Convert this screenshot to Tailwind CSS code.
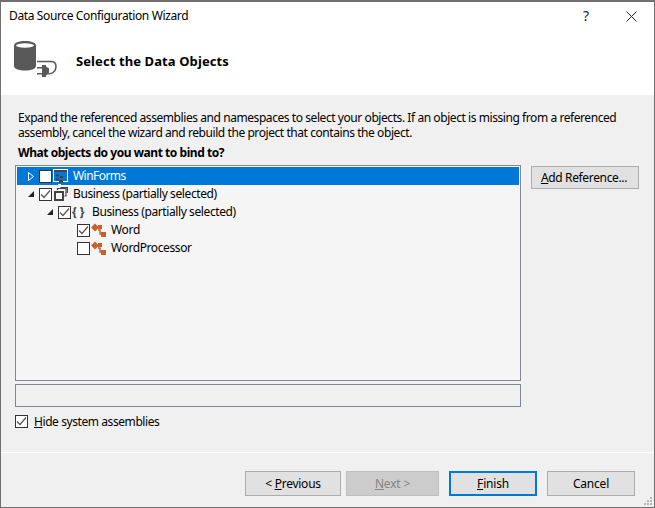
<!DOCTYPE html>
<html lang="en">
<head>
    <meta charset="UTF-8">
    <title>Data Source Configuration Wizard</title>
    <script src="https://cdn.jsdelivr.net/npm/@tailwindcss/browser@4"></script>
</head>
<body class="w-[655px] h-[508px] overflow-hidden bg-[#f0f0f0] font-['Noto_Sans',sans-serif] text-[12px] leading-[16px] text-black">
<div class="relative w-[655px] h-[508px] border-x border-b border-t-2 border-[#707070] flex flex-col">
    <!-- Header -->
    <div class="h-[93px] bg-white shrink-0">
        <div class="flex items-center h-[28px] pl-[8px]">
            <span class="flex-1 tracking-[-0.37px]">Data Source Configuration Wizard</span>
            <span class="w-[14px] mr-[-2px] text-[14px] text-[#222]">?</span>
            <svg class="ml-[31px] mr-[17px]" width="11" height="11" viewBox="0 0 11 11" fill="none" stroke="#222"><path d="M0.5 0.5l10 10M10.5 0.5l-10 10"/></svg>
        </div>
        <div class="flex items-start h-[50px] pl-[13px] pt-[11px]">
            <svg width="44" height="38" viewBox="0 0 44 38" class="shrink-0">
                <path d="M0 4.500C0 1.500 5 0 11 0s11 1.500 11 4.500V25c0 3-5 4.500-11 4.500S0 28 0 25z" fill="#595959"/>
                <ellipse cx="11" cy="4.500" rx="9" ry="2.200" fill="#fff"/>
                <path d="M23 20.500h14c3 0 5 2 5 5 0 4-3 7.500-7.500 7.500" fill="none" stroke="#595959" stroke-width="1.500"/>
                <path d="M23 26h5v1.500h-5zM23 32h5v1.500h-5zM28 24h4v12h-4zM32 25.500l3 2v5l-3 2z" fill="#595959"/>
            </svg>
            <span class="ml-[18px] mt-[12px] text-[13px] font-bold tracking-[0.1px]">Select the Data Objects</span>
        </div>
    </div>

    <!-- Body -->
    <div class="flex-1 pl-[14px] pr-[15px] pt-[15px]">
        <p class="ml-[3px] leading-[15px] tracking-[-0.43px] w-[620px]">Expand the referenced assemblies and namespaces to select your objects. If an object is missing from a referenced assembly, cancel the wizard and rebuild the project that contains the object.</p>
        <p class="ml-[3px] font-bold mt-[5px] h-[16px] tracking-[-0.45px]">What objects do you want to bind to?</p>

        <div class="flex mt-[4px]">
            <div class="w-[506px] shrink-0">
                <!-- Tree -->
                <div class="h-[216px] border border-[#828790] bg-[#f5f5f5] p-[1px]">
                    <div class="flex items-center h-[18px] bg-[#0078d7] text-white">
                        <svg class="ml-[11px]" width="7" height="9" viewBox="0 0 7 9" fill="none" stroke="#fff"><path d="M.5 .5l5 4-5 4z"/></svg>
                        <span class="ml-[4px] w-[13px] h-[13px] bg-white border border-[#333]"></span>
                        <svg class="ml-[1px] mt-[1px]" width="15" height="16" viewBox="0 0 15 16"><rect x=".5" y=".5" width="14" height="12" fill="none" stroke="#fff"/><rect x="1" y="1" width="13" height="2" fill="#444"/><path d="M3 5.500h3v2H3zM7 7h3v2H7zM3 9.500h3v2H3zM6 11h4v3H6z" fill="#444"/><path d="M5 15h3v1H5z" fill="#fff"/></svg>
                        <span class="ml-[5px] tracking-[-0.55px]">WinForms</span>
                    </div>
                    <div class="flex items-center h-[18px]">
                        <svg class="ml-[11px]" width="7" height="7" viewBox="0 0 7 7"><path d="M6 0v6H0z" fill="#222"/></svg>
                        <span class="ml-[4px] w-[13px] h-[13px] bg-white border border-[#333] flex items-center justify-center"><svg width="11" height="9" viewBox="0 0 11 9" fill="none" stroke="#555" stroke-width="1.200"><path d="M1 4.500l3 3 6-7"/></svg></span>
                        <svg class="ml-[2px]" width="14" height="14" viewBox="0 0 14 14" fill="none" stroke="#444" stroke-width="1.200"><rect x="1" y="5" width="8" height="8" stroke-width="2"/><path d="M3.500 3V1.500H12V9h-1.500"/><path d="M6.500 .6h7V6"/></svg>
                        <span class="ml-[5px] tracking-[-0.4px]">Business (partially selected)</span>
                    </div>
                    <div class="flex items-center h-[18px]">
                        <svg class="ml-[30px]" width="7" height="7" viewBox="0 0 7 7"><path d="M6 0v6H0z" fill="#222"/></svg>
                        <span class="ml-[4px] w-[13px] h-[13px] bg-white border border-[#333] flex items-center justify-center"><svg width="11" height="9" viewBox="0 0 11 9" fill="none" stroke="#555" stroke-width="1.200"><path d="M1 4.500l3 3 6-7"/></svg></span>
                        <span class="ml-[1px] w-[20px] text-[12px] font-bold text-[#444]">{ }</span>
                        <span class="tracking-[-0.4px]">Business (partially selected)</span>
                    </div>
                    <div class="flex items-center h-[18px]">
                        <span class="ml-[60px] w-[13px] h-[13px] bg-white border border-[#333] flex items-center justify-center"><svg width="11" height="9" viewBox="0 0 11 9" fill="none" stroke="#555" stroke-width="1.200"><path d="M1 4.500l3 3 6-7"/></svg></span>
                        <svg class="ml-[1px]" width="15" height="14" viewBox="0 0 15 14"><path d="M0 4.500l4-4 4 4-4 4zM7 2h4v4H7zM10 9h5v5h-5z" fill="#c8622d"/><path d="M7 7h2v4h2" fill="none" stroke="#c8622d" stroke-width="1.500"/></svg>
                        <span class="ml-[5px] tracking-[-0.3px]">Word</span>
                    </div>
                    <div class="flex items-center h-[18px]">
                        <span class="ml-[60px] w-[13px] h-[13px] bg-white border border-[#333]"></span>
                        <svg class="ml-[1px]" width="15" height="14" viewBox="0 0 15 14"><path d="M0 4.500l4-4 4 4-4 4zM7 2h4v4H7zM10 9h5v5h-5z" fill="#c8622d"/><path d="M7 7h2v4h2" fill="none" stroke="#c8622d" stroke-width="1.500"/></svg>
                        <span class="ml-[5px] tracking-[-0.4px]">WordProcessor</span>
                    </div>
                </div>
                <div class="h-[23px] mt-[3px] border border-[#828790] bg-[#f0f0f0]"></div>
                <label class="flex items-center mt-[8px] h-[13px]">
                    <span class="w-[13px] h-[13px] bg-white border border-[#333] flex items-center justify-center"><svg width="11" height="9" viewBox="0 0 11 9" fill="none" stroke="#555" stroke-width="1.200"><path d="M1 4.500l3 3 6-7"/></svg></span>
                    <span class="ml-[6px] tracking-[-0.42px]"><span class="underline">H</span>ide system assemblies</span>
                </label>
            </div>
            <button class="ml-[10px] w-[108px] h-[23px] mt-[1px] bg-[#e1e1e1] border border-[#adadad] tracking-[-0.35px] pr-[2px]"><span class="underline">A</span>dd Reference...</button>
        </div>
    </div>

    <!-- Footer -->
    <div class="h-[55px] shrink-0 border-t border-white flex items-start pt-[18px] text-center">
        <button class="ml-[244px] w-[96px] h-[25px] bg-[#e1e1e1] border border-[#adadad] tracking-[-0.25px]">&lt; <span class="underline">P</span>revious</button>
        <button class="ml-[5px] w-[93px] h-[25px] bg-[#cccccc] border border-[#bfbfbf] text-[#838383] tracking-[-0.2px]"><span class="underline">N</span>ext &gt;</button>
        <button class="ml-[10px] w-[88px] h-[25px] bg-[#e1e1e1] border-2 border-[#0078d7] tracking-[-0.2px]"><span class="underline">F</span>inish</button>
        <button class="ml-[10px] w-[88px] h-[25px] bg-[#e1e1e1] border border-[#adadad] tracking-[-0.2px]">Cancel</button>
    </div>

    <!-- Size grip -->
    <svg class="absolute right-[1px] bottom-[1px]" width="10" height="10" viewBox="0 0 10 10" fill="#b5b5b5"><path d="M7 1h2v2H7zM4 4h2v2H4zM7 4h2v2H7zM1 7h2v2H1zM4 7h2v2H4zM7 7h2v2H7z"/></svg>
</div>
</body>
</html>
